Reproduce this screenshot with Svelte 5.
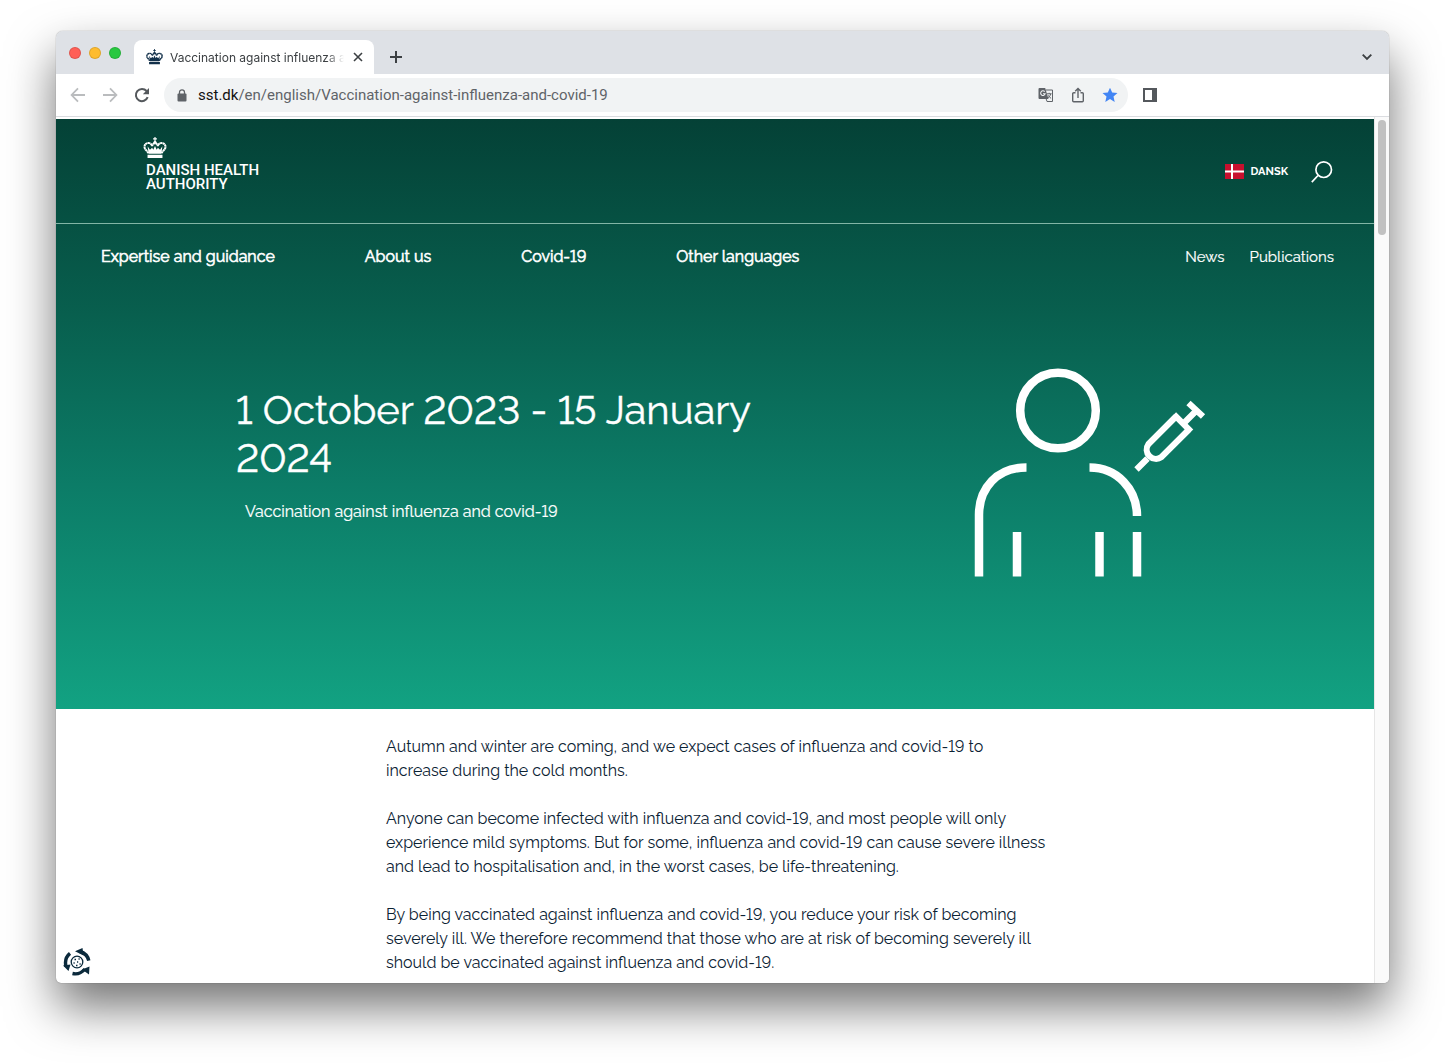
<script lang="ts">
	const tabTitle = 'Vaccination against influenza and covid-19';
	const host = 'sst.dk';
	const path = '/en/english/Vaccination-against-influenza-and-covid-19';

	const mainLinks = ['Expertise and guidance', 'About us', 'Covid-19', 'Other languages'];
	const sideLinks = ['News', 'Publications'];

	const paragraphs = [
		'Autumn and winter are coming, and we expect cases of influenza and covid-19 to increase during the cold months.',
		'Anyone can become infected with influenza and covid-19, and most people will only experience mild symptoms. But for some, influenza and covid-19 can cause severe illness and lead to hospitalisation and, in the worst cases, be life-threatening.',
		'By being vaccinated against influenza and covid-19, you reduce your risk of becoming severely ill. We therefore recommend that those who are at risk of becoming severely ill should be vaccinated against influenza and covid-19.'
	];
</script>

{#snippet crown()}
	<path d="M11.400 0h1.200v1.300H14v1.200h-1.400v1.600h-1.200V2.500H10V1.300h1.400z" />
	<circle cx="12" cy="5.400" r="1.600" />
	<path
		d="M5 17C4.500 14.500 1 13.300 1 10.300 1 7.800 3 6.300 5.200 6.300c2.300 0 3.500 1.700 3.800 3.200.4-2 1.500-3 3-3s2.600 1 3 3c.3-1.500 1.500-3.200 3.800-3.200 2.200 0 4.200 1.500 4.200 4 0 3-3.500 4.200-4 6.700"
		fill="none"
		stroke="currentColor"
		stroke-width="2.100"
		stroke-dasharray="2.400 .3"
	/>
	<path d="M4.300 9.800l2.400 3.400L9 11.300l1.200 2 1.800-3.800 1.800 3.800 1.200-2 2.300 1.900 2.400-3.400-1 7.700H5.300z" />
	<path d="M4.200 18.600h15.600V22H4.200z" />
{/snippet}

<div class="window">
	<div class="tab-bar">
		<div class="lights">
			<button class="light red" aria-label="Close window"></button>
			<button class="light yellow" aria-label="Minimise window"></button>
			<button class="light green" aria-label="Zoom window"></button>
		</div>
		<div class="tab">
			<svg class="favicon" viewBox="0 0 24 23" width="17" height="16" fill="currentColor">{@render crown()}</svg>
			<span class="tab-title">{tabTitle}</span>
			<button class="icon" aria-label="Close tab">
				<svg viewBox="0 0 10 10" width="10" height="10"><path d="M1 1l8 8M9 1L1 9" stroke="#3c4043" stroke-width="1.600" /></svg>
			</button>
		</div>
		<button class="icon new-tab" aria-label="New tab">
			<svg viewBox="0 0 12 12" width="12" height="12"><path d="M6 0v12M0 6h12" stroke="#3c4043" stroke-width="2" /></svg>
		</button>
		<button class="icon tab-search" aria-label="Search tabs">
			<svg viewBox="0 0 10 7" width="10" height="7" fill="none"><path d="M.700.700L5 5l4.300-4.300" stroke="#3c4043" stroke-width="1.900" /></svg>
		</button>
	</div>

	<div class="toolbar">
		<div class="history">
			<button class="icon" aria-label="Back">
				<svg viewBox="0 0 16 16" width="16" height="16" fill="none" stroke="#babcbe" stroke-width="1.800"><path d="M15 8H2M8 1.300L1.600 8 8 14.700" /></svg>
			</button>
			<button class="icon" aria-label="Forward">
				<svg viewBox="0 0 16 16" width="16" height="16" fill="none" stroke="#babcbe" stroke-width="1.800"><path d="M1 8h13M8 1.300L14.400 8 8 14.700" /></svg>
			</button>
			<button class="icon" aria-label="Reload">
				<svg viewBox="0 0 16 16" width="16" height="16">
					<path d="M13.700 10.200A6.100 6.100 0 1 1 12.600 4" fill="none" stroke="#54585c" stroke-width="2" />
					<path d="M15 1v6.200H8.800z" fill="#54585c" />
				</svg>
			</button>
		</div>
		<div class="address">
			<svg class="lock" viewBox="0 0 10 13" width="10" height="13">
				<path d="M2.500 5V3.300a2.500 2.500 0 0 1 5 0V5" fill="none" stroke="#5f6368" stroke-width="1.300" />
				<rect x=".5" y="4.500" width="9" height="8" rx="1" fill="#5f6368" />
			</svg>
			<span class="url"><span class="host">{host}</span>{path}</span>
			<button class="icon" aria-label="Translate this page">
				<svg viewBox="0 0 16 16" width="16" height="16">
					<path d="M1.500 1h5.700l3.300 11H1.500A1 1 0 0 1 .5 11V2a1 1 0 0 1 1-1z" fill="#5f6368" />
					<path d="M8 3h6.500v11.500H9L8.200 12" fill="none" stroke="#5f6368" />
					<path d="M6.700 4.600a2.300 2.300 0 1 0 .5 2.100H5" fill="none" stroke="#f1f3f4" stroke-width="1.100" />
					<path d="M9 6.800h4.600M11.200 5.800v1M12.700 6.800c-.4 2-1.600 3.400-3 4.300M10.200 8.300c.7 1.400 1.700 2.300 2.900 3" fill="none" stroke="#5f6368" />
				</svg>
			</button>
			<button class="icon" aria-label="Share">
				<svg viewBox="0 0 16 16" width="16" height="16" fill="none" stroke="#5f6368" stroke-width="1.400">
					<path d="M5.500 5.700H3.700a1 1 0 0 0-1 1v7a1 1 0 0 0 1 1h8.600a1 1 0 0 0 1-1v-7a1 1 0 0 0-1-1h-1.800M8 11V2M5.200 4.300L8 1.500l2.800 2.800" />
				</svg>
			</button>
			<button class="icon" aria-label="Edit bookmark">
				<svg viewBox="0 0 16 16" width="16" height="16"><path d="M8 .7l2.200 4.900 5.300.5-4 3.500 1.200 5.300L8 12.100l-4.700 2.800 1.200-5.300-4-3.500 5.300-.5z" fill="#4285f4" /></svg>
			</button>
		</div>
		<button class="icon side-panel" aria-label="Side panel">
			<svg viewBox="0 0 14 14" width="14" height="14"><path d="M0 0h14v14H0zM2 2v10h7V2z" fill="#54585c" fill-rule="evenodd" /></svg>
		</button>
	</div>

	<div class="viewport">
		<div class="page">
			<header class="banner">
				<div class="brand-row">
					<a class="logo" href="/en">
						<svg viewBox="0 0 24 23" width="24" height="22" fill="currentColor">{@render crown()}</svg>
						<span class="logo-text">DANISH HEALTH<br />AUTHORITY</span>
					</a>
					<div class="tools">
						<a class="language" href="/da">
							<svg viewBox="0 0 19 15" width="19" height="15">
								<path d="M0 0h19v15H0z" fill="#c8102e" />
								<path d="M7 0v15M0 7.500h19" stroke="#fff" stroke-width="2" />
							</svg>
							DANSK
						</a>
						<button class="icon" aria-label="Search">
							<svg viewBox="0 0 22 22" width="22" height="22" fill="none" stroke="#fff" stroke-width="1.700"><circle cx="12.700" cy="8.700" r="7.800" /><path d="M7 14.500L.8 21.200" /></svg>
						</button>
					</div>
				</div>
				<nav>
					<ul class="main-links">
						{#each mainLinks as link}
							<li><a href="/en">{link}</a></li>
						{/each}
					</ul>
					<ul class="side-links">
						{#each sideLinks as link}
							<li><a href="/en">{link}</a></li>
						{/each}
					</ul>
				</nav>
				<div class="hero">
					<div class="hero-text">
						<h1>1 October 2023 - 15 January 2024</h1>
						<p>Vaccination against influenza and covid-19</p>
					</div>
					<svg class="hero-art" viewBox="0 0 232 210" width="232" height="210" fill="none" stroke="#fff" stroke-width="8.500">
						<circle cx="84" cy="42.500" r="37.800" />
						<path d="M52.500 99.500C23 99.500 5 120 5 147v61.500M115.500 99.500c28 0 47.500 22 47.500 48.500M43 164v44.500M125.500 164v44.500M163 164v44.500" />
						<g stroke-width="6.200">
							<path d="M162.500 101.500l11-11M210 55l12-12M214.500 35l14.500 13.500" />
							<path d="M199.900 46.400l17.200 17.200M202 48.500L174.500 76A9.300 9.300 0 0 0 187.500 89L215 61.500" />
						</g>
					</svg>
				</div>
			</header>
			<article>
				{#each paragraphs as text}
					<p>{text}</p>
				{/each}
			</article>
			<button class="icon consent" aria-label="Cookie settings">
				<svg viewBox="0 0 28 28" width="28" height="28" fill="none" stroke="#0b2a3c">
					<circle cx="14" cy="14" r="5.800" stroke-width="1.300" />
					<path d="M17 3.500c4.500 1.300 7.800 4.500 8.800 9.200M7 5.300C3 8.500 1.800 13.500 3 18.500M9.500 25.500c4.500 1 9-.3 12.500-4.500" stroke-width="3.400" />
					<path d="M12 3.200L19.500 0l1 7.500zM0 17.500l7.500-1L5.500 23zM19 21.500l7.500-3-.5 8z" fill="#0b2a3c" stroke="none" />
					<path d="M11.500 11.500H13M15.500 11h1.200M10.500 15h1.200M14 14h1.200M16.500 16h1.200M13 17.500h1.500" stroke-width="1.500" />
				</svg>
			</button>
		</div>
		<div class="scrollbar"><div class="thumb"></div></div>
	</div>
</div>

<style>
	:global(body) {
		background: #fff;
	}

	.window {
		margin: 31px 56px 80px;
		border-radius: 7px 7px 5px 5px;
		overflow: hidden;
		background: #fff;
		box-shadow: 0 0 1px rgba(0, 0, 0, .55), 0 24px 48px rgba(0, 0, 0, .55);
		font-family: Roboto, sans-serif;
	}

	a {
		color: inherit;
		text-decoration: none;
	}

	ul {
		display: flex;
		margin: 0;
		padding: 0;
		list-style: none;
	}

	svg {
		display: block;
		flex: none;
	}

	.icon {
		padding: 0;
		border: 0;
		background: none;
		cursor: pointer;
	}

	.tab-bar {
		display: flex;
		align-items: flex-end;
		height: 43px;
		background: #dee1e6;
	}

	.lights {
		display: flex;
		gap: 8px;
		padding: 0 13px 15px;
	}

	.light {
		width: 12px;
		height: 12px;
		padding: 0;
		border: 1px solid rgba(0, 0, 0, .12);
		border-radius: 50%;
	}

	.red {
		background: #ff5f57;
	}

	.yellow {
		background: #febc2e;
	}

	.green {
		background: #28c840;
	}

	.tab {
		display: flex;
		align-items: center;
		box-sizing: border-box;
		width: 240px;
		height: 34px;
		padding: 0 11px 0 12px;
		border-radius: 8px 8px 0 0;
		background: #fff;
		color: #3c4043;
	}

	.favicon {
		margin-right: 7px;
		color: #12304a;
	}

	.tab-title {
		flex: 1;
		margin-right: 9px;
		overflow: hidden;
		font-family: Inter, sans-serif;
		font-size: 12px;
		white-space: nowrap;
		mask-image: linear-gradient(to right, #000 90%, transparent);
	}

	.new-tab {
		margin: 0 0 11px 16px;
	}

	.tab-search {
		margin: 0 17px 13px auto;
	}

	.toolbar {
		display: flex;
		align-items: center;
		height: 42px;
		border-bottom: 1px solid #dadce0;
	}

	.history {
		display: flex;
		gap: 16px;
		padding: 0 14px;
	}

	.address {
		display: flex;
		align-items: center;
		gap: 16px;
		box-sizing: border-box;
		width: 964px;
		height: 34px;
		padding: 0 10px 0 13px;
		border-radius: 17px;
		background: #f1f3f4;
	}

	.url {
		flex: 1;
		margin-left: -5px;
		color: #5f6368;
		font-size: 15px;
		white-space: nowrap;
	}

	.host {
		color: #111;
	}

	.side-panel {
		margin-left: 15px;
	}

	.viewport {
		display: flex;
		padding-top: 2px;
	}

	.page {
		position: relative;
		flex: 1;
		font-family: Raleway, Lato, sans-serif;
		font-variant-numeric: lining-nums;
	}

	.scrollbar {
		box-sizing: border-box;
		width: 15px;
		margin-top: -2px;
		padding: 3px 3px 0;
		border-left: 1px solid #e6e6e6;
		background: #fafafa;
	}

	.thumb {
		height: 115px;
		border-radius: 4px;
		background: #c1c1c1;
	}

	.banner {
		height: 590px;
		background: linear-gradient(#044136, #085f4e 33%, #0c7c67 62%, #12a282);
		color: #fff;
	}

	.brand-row {
		display: flex;
		justify-content: space-between;
		box-sizing: border-box;
		height: 105px;
		padding: 18px 41px 0 87px;
		border-bottom: 1px solid #82b5a6;
	}

	.logo-text {
		display: block;
		margin: 4px 0 0 3px;
		font: 500 15px/14px Roboto, sans-serif;
	}

	.tools {
		display: flex;
		gap: 23px;
		height: 69px;
		align-items: center;
	}

	.language {
		display: flex;
		align-items: center;
		gap: 7px;
		font-size: 11px;
		font-weight: 700;
	}

	nav {
		display: flex;
		justify-content: space-between;
		padding: 22px 40px 0 45px;
		line-height: 22px;
	}

	.main-links {
		gap: 90px;
		font-size: 16px;
		-webkit-text-stroke: .6px currentColor;
	}

	.side-links {
		gap: 25px;
		font-size: 15px;
		-webkit-text-stroke: .2px currentColor;
	}

	.hero {
		display: flex;
		justify-content: space-between;
		padding: 100px 168px 0 180px;
	}

	.hero-text {
		width: 540px;
		padding-top: 18px;
	}

	h1 {
		margin: 0;
		font-size: 40px;
		font-weight: 400;
		line-height: 48px;
		-webkit-text-stroke: .4px currentColor;
	}

	.hero-text p {
		margin: 18px 9px;
		font-size: 16px;
		line-height: 24px;
		-webkit-text-stroke: .2px currentColor;
	}

	article {
		max-width: 660px;
		padding: 26px 0 8px 330px;
		color: #0b2233;
		font-size: 16px;
		line-height: 24px;
	}

	article p {
		margin: 0 0 24px;
	}

	article p:last-child {
		margin: 0;
	}

	.consent {
		position: absolute;
		bottom: 7px;
		left: 7px;
	}
</style>
